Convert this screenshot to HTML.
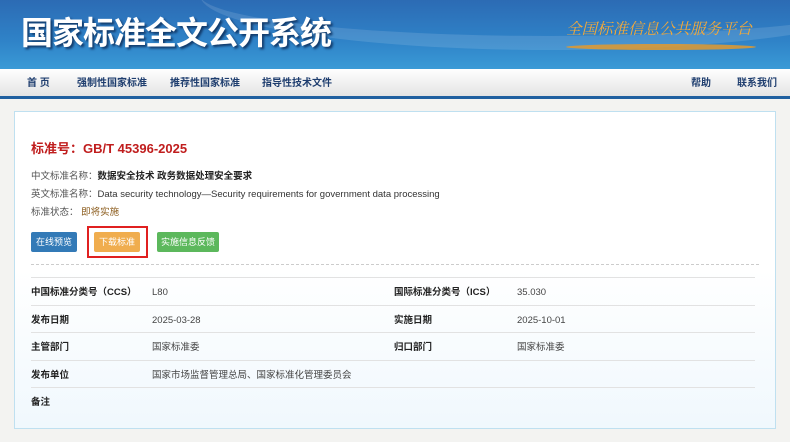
<!DOCTYPE html>
<html><head><meta charset="utf-8"><style>
*{margin:0;padding:0;box-sizing:border-box}
body{width:790px;height:442px;overflow:hidden;background:#f3f3f1;font-family:"Liberation Sans","Noto Sans CJK SC",sans-serif;position:relative}
.hd{position:absolute;left:0;top:0;width:790px;height:69px;background:linear-gradient(180deg,#2c6bb4 0%,#2f83c8 60%,#3a9ad6 100%);overflow:hidden}
.hd .sw{position:absolute;left:200px;top:-60px;width:700px;height:110px;border-radius:50%;border-bottom:14px solid rgba(255,255,255,.12)}
.hd h1{position:absolute;left:21px;top:13px;font-size:32px;line-height:36px;color:#fff;font-weight:bold;letter-spacing:-1px;text-shadow:2px 2px 2px #123a6a;font-family:"Noto Sans CJK SC",sans-serif}
.hd .sl{position:absolute;left:566px;top:19px;font-size:15.5px;line-height:18px;color:#f3a93a;font-style:italic;font-family:"Noto Serif CJK SC",serif;letter-spacing:0}
.hd .bar{position:absolute;left:566px;top:44px;width:190px;height:6px;border-radius:50%;background:#e39a2e;opacity:.85}
.nav{position:absolute;left:0;top:69px;width:790px;height:30px;background:linear-gradient(#fff,#e3e3e3);border-bottom:3px solid #1f5f9f}
.nav span{position:absolute;top:9px;font-size:10px;line-height:12px;color:#1e3d6e;font-weight:bold}
.card{position:absolute;left:14px;top:111px;width:762px;height:318px;border:1px solid #bfe0f0;background:linear-gradient(#fff 50%,#f0f8fd)}
.t{position:absolute;left:31px;top:138px;font-size:13px;color:#c01d1d;font-weight:bold}
.l{position:absolute;left:31px;font-size:9.5px;color:#555}
.l b{color:#222}
.btn{position:absolute;top:232px;height:20px;color:#fff;font-size:9px;text-align:center;line-height:20px;border-radius:2px}
.red{position:absolute;left:87px;top:226px;width:61px;height:32px;border:2px solid #e02020}
.dash{position:absolute;left:31px;top:264px;width:728px;border-top:1px dashed #ccc}
.r{position:absolute;font-size:9.5px;line-height:12px;color:#444}
.k{font-weight:bold;color:#222}
.ln{position:absolute;left:31px;width:724px;border-top:1px solid #e2e2e2}
</style></head><body>
<div class="hd"><div class="sw"></div><h1>国家标准全文公开系统</h1><div class="bar"></div><div class="sl">全国标准信息公共服务平台</div></div>
<div class="nav"><span style="left:27px">首 页</span><span style="left:77px">强制性国家标准</span><span style="left:170px">推荐性国家标准</span><span style="left:262px">指导性技术文件</span><span style="left:691px">帮助</span><span style="left:737px">联系我们</span></div>
<div class="card"></div>
<div class="ln" style="top:277px"></div>
<div class="ln" style="top:305px"></div>
<div class="ln" style="top:332px"></div>
<div class="ln" style="top:360px"></div>
<div class="ln" style="top:387px"></div>
<div class="t">标准号：GB/T 45396-2025</div>
<div class="l" style="top:168px">中文标准名称：<b>数据安全技术 政务数据处理安全要求</b></div>
<div class="l" style="top:186px">英文标准名称：<span style="color:#333">Data security technology—Security requirements for government data processing</span></div>
<div class="l" style="top:204px">标准状态： <span style="color:#8a5a1a">即将实施</span></div>
<div class="btn" style="left:31px;width:46px;background:#337ab7">在线预览</div>
<div class="btn" style="left:94px;width:46px;background:#f0ad4e">下载标准</div>
<div class="btn" style="left:157px;width:62px;background:#5cb85c">实施信息反馈</div>
<div class="red"></div>
<div class="dash"></div>
<div class="r k" style="left:31px;top:287px">中国标准分类号（CCS）</div><div class="r" style="left:152px;top:287px">L80</div>
<div class="r k" style="left:394px;top:287px">国际标准分类号（ICS）</div><div class="r" style="left:517px;top:287px">35.030</div>
<div class="r k" style="left:31px;top:315px">发布日期</div><div class="r" style="left:152px;top:315px">2025-03-28</div>
<div class="r k" style="left:394px;top:315px">实施日期</div><div class="r" style="left:517px;top:315px">2025-10-01</div>
<div class="r k" style="left:31px;top:342px">主管部门</div><div class="r" style="left:152px;top:342px">国家标准委</div>
<div class="r k" style="left:394px;top:342px">归口部门</div><div class="r" style="left:517px;top:342px">国家标准委</div>
<div class="r k" style="left:31px;top:370px">发布单位</div><div class="r" style="left:152px;top:370px">国家市场监督管理总局、国家标准化管理委员会</div>
<div class="r k" style="left:31px;top:397px">备注</div>
</body></html>
